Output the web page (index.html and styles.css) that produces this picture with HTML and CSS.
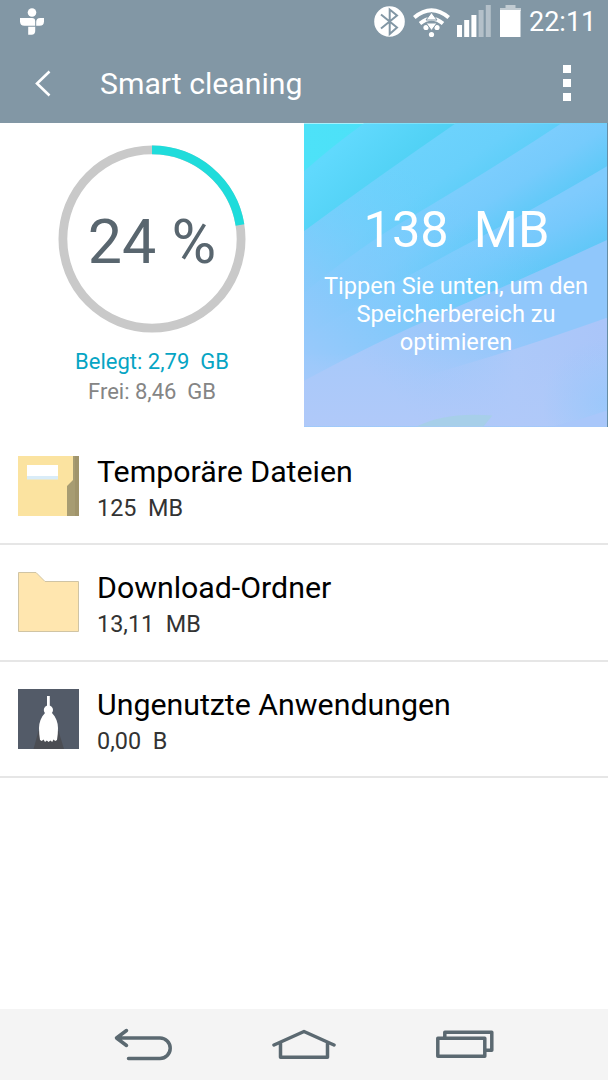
FILE: index.html
```html
<!DOCTYPE html>
<html lang="de">
<head>
  <meta charset="UTF-8" />
  <title>Smart cleaning</title>
  <meta name="viewport" content="width=device-width, initial-scale=1.0" />
  <link rel="stylesheet" href="styles.css">
</head>
<body>
  <header>
    <div class="status-bar">
      <svg class="notification" width="24" height="28" viewBox="0 0 24 28" fill="#fff">
        <circle cx="12" cy="4.5" r="4.3" />
        <path d="M0 10h12q3.2 0 3.2 3.2v4.600H4.500q-4.500 0-4.500-4.500z" />
        <path d="M16.200 17.800v-3.800q0-4 4-4h3.800v3.300q0 4.500-4.500 4.500z" />
        <path d="M8.200 18.700h7v4.300q0 3.700-3.700 3.700H8.200z" />
      </svg>
      <div class="status-icons">
        <svg width="31" height="32" viewBox="0 0 31 32">
          <circle cx="15.500" cy="15.500" r="15.300" fill="#fff" />
          <path d="M7 8.500L23 21.500 15.700 28V3.500L23 9.500 7 22.500" fill="none" stroke="#8297a5" stroke-width="2" />
        </svg>
        <svg class="wifi" width="37" height="30" viewBox="0 0 37 30">
          <g fill="none" stroke="#fff">
            <path d="M1.300 9.500Q18.500-5 35.700 9.500" stroke-width="4" />
            <path d="M7 15.500Q18.500 6 30 15.500" stroke-width="3.800" />
          </g>
          <circle cx="13" cy="19.500" r="2.600" fill="#fff" />
          <circle cx="24" cy="19.500" r="2.600" fill="#fff" />
          <circle cx="18.500" cy="26.500" r="2.600" fill="#fff" />
          <path d="M18.500 4.500l5.500 7.500H13zM13 15h11l-5.500 7.500z" fill="#fff" stroke="#8297a5" />
        </svg>
        <svg class="signal" width="34" height="32" viewBox="0 0 34 32" fill="#fff">
          <path d="M0 20h5v12H0zM7.200 15h5v17h-5zM14.400 10h5v22h-5z" />
          <path d="M21.600 5h5v27h-5zM28.800 0h5v32h-5z" opacity=".4" />
        </svg>
        <svg class="battery" width="21" height="32" viewBox="0 0 21 32" fill="#fff">
          <path d="M5.500 0h10v3H21v3H0V3h5.500z" opacity=".5" />
          <path d="M0 5h20.500v27H0z" />
        </svg>
        <span class="clock">22:11</span>
      </div>
    </div>
    <div class="title-bar">
      <svg class="back" width="16" height="28" viewBox="0 0 16 28" fill="none" stroke="#fff" stroke-width="2.600">
        <path d="M14.500 1.500L2 13.500l12.500 12" />
      </svg>
      <h1>Smart cleaning</h1>
      <div class="menu"><i></i><i></i><i></i></div>
    </div>
  </header>

  <section class="overview">
    <div class="usage">
      <div class="gauge">
        <svg width="188" height="188" viewBox="0 0 188 188" fill="none" stroke-width="8.800">
          <circle cx="94" cy="94" r="89.100" stroke="#c9c9c9" />
          <path d="M94 4.900A89.100 89.100 0 0 1 182 80" stroke="#1fdcdb" />
        </svg>
        <span class="percent">24 %</span>
      </div>
      <div class="used">Belegt: 2,79&nbsp; GB</div>
      <div class="free">Frei: 8,46&nbsp; GB</div>
    </div>
    <div class="optimize">
      <svg class="waves" width="304" height="304" viewBox="0 0 304 304">
        <defs>
          <linearGradient id="w0" x1="0" y1="0" x2="1" y2="0">
            <stop offset="0" stop-color="#4de2f8" /><stop offset="1" stop-color="#4bd9f7" />
          </linearGradient>
          <linearGradient id="w1" gradientUnits="userSpaceOnUse" x1="20" y1="35" x2="65" y2="82">
            <stop offset="0" stop-color="#60d9fd" /><stop offset="1" stop-color="#50d1f4" />
          </linearGradient>
          <linearGradient id="w2" gradientUnits="userSpaceOnUse" x1="100" y1="38" x2="150" y2="110">
            <stop offset="0" stop-color="#6cd2fc" /><stop offset=".4" stop-color="#69d0fb" /><stop offset="1" stop-color="#53ccf5" />
          </linearGradient>
          <linearGradient id="w3" gradientUnits="userSpaceOnUse" x1="190" y1="45" x2="225" y2="100">
            <stop offset="0" stop-color="#7bcdfd" /><stop offset=".4" stop-color="#76cbfc" /><stop offset="1" stop-color="#5bc9f7" />
          </linearGradient>
          <linearGradient id="w4" gradientUnits="userSpaceOnUse" x1="200" y1="105" x2="230" y2="165">
            <stop offset="0" stop-color="#7fcbfd" /><stop offset=".35" stop-color="#76c9fc" /><stop offset="1" stop-color="#5bc7f6" />
          </linearGradient>
          <linearGradient id="w5" gradientUnits="userSpaceOnUse" x1="90" y1="275" x2="200" y2="165">
            <stop offset="0" stop-color="#a8c9fa" /><stop offset="1" stop-color="#90c7fb" />
          </linearGradient>
          <linearGradient id="w6" gradientUnits="userSpaceOnUse" x1="120" y1="0" x2="304" y2="0">
            <stop offset="0" stop-color="#adc9f9" stop-opacity="0" /><stop offset=".5" stop-color="#adc9f9" /><stop offset="1" stop-color="#aac5f9" />
          </linearGradient>
          <linearGradient id="haze" gradientUnits="userSpaceOnUse" x1="20" y1="250" x2="145" y2="70">
            <stop offset="0" stop-color="#9ac9fb" /><stop offset=".3" stop-color="#8ac9fb" stop-opacity=".9" /><stop offset="1" stop-color="#70cffc" stop-opacity="0" />
          </linearGradient>
          <linearGradient id="bottom" gradientUnits="userSpaceOnUse" x1="0" y1="230" x2="0" y2="304">
            <stop offset="0" stop-color="#b0c9f9" stop-opacity="0" /><stop offset="1" stop-color="#b0c9f9" />
          </linearGradient>
          <radialGradient id="corner" gradientUnits="userSpaceOnUse" cx="304" cy="280" r="65">
            <stop offset="0" stop-color="#9ac8fb" stop-opacity=".9" /><stop offset="1" stop-color="#9ac8fb" stop-opacity="0" />
          </radialGradient>
        </defs>
        <path d="M0 0h304v304H0z" fill="url(#w0)" />
        <path d="M0 48Q28 23 60 0h244v304H0z" fill="url(#w1)" />
        <path d="M0 108Q72 55 152 0h152v304H0z" fill="url(#w2)" />
        <path d="M0 170Q60 120 112 91Q190 45 258 0h46v304H0z" fill="url(#w3)" />
        <path d="M0 215Q80 165 160 123T304 43v261H0z" fill="url(#w4)" />
        <path d="M0 108Q72 55 152 0h152v304H0z" fill="url(#haze)" />
        <path d="M0 258Q70 220 140 190T304 117v187H0z" fill="url(#w5)" />
        <path d="M110 257Q150 245 190 233T304 195v109H110z" fill="url(#w6)" />
        <path d="M0 230h304v74H0z" fill="url(#bottom)" />
        <path d="M230 215Q270 207 304 195v109H230z" fill="url(#corner)" />
        <path d="M250 304q28-7 54-16v16z" fill="#a9c7fa" />
        <path d="M113 304q30-15 76-11l-9 11z" fill="#a7cfe9" />
      </svg>
      <div class="amount">138&nbsp; MB</div>
      <p>Tippen Sie unten, um den Speicherbereich zu optimieren</p>
    </div>
  </section>

  <ul class="items">
    <li>
      <svg width="61" height="60" viewBox="0 0 61 60">
        <path d="M0 0h61v60H0z" fill="#a79c72" />
        <path d="M57 0h4v60h-4z" fill="#9b9068" opacity=".6" />
        <path d="M0 0h55v24l-6 6v30H0z" fill="#fbe3a0" />
        <path d="M9 9h31v14H9z" fill="#fff" />
        <path d="M9 20h31v3.500H9z" fill="#d9ecf8" />
      </svg>
      <div>
        <h2>Temporäre Dateien</h2>
        <span>125&nbsp; MB</span>
      </div>
    </li>
    <li>
      <svg width="61" height="60" viewBox="0 0 61 60">
        <path d="M.5.5h17.500l9 9h33.500v50H.5z" fill="#ffe6af" stroke="#d0c4a4" />
      </svg>
      <div>
        <h2>Download-Ordner</h2>
        <span>13,11&nbsp; MB</span>
      </div>
    </li>
    <li>
      <svg width="61" height="60" viewBox="0 0 61 60">
        <path d="M0 0h61v60H0z" fill="#535b68" />
        <path d="M20.500 42h20l5.500 18H15.500z" fill="#4b4d53" />
        <g fill="#fff">
          <path d="M29 7h2.800v12H29z" />
          <circle cx="30.400" cy="21" r="4.600" />
          <path d="M27 24h7C38 28 40 33.500 40 39q0 6-1 12l-1.800 1-1.700-1.500-1.300 2.500-1.800-1.500-1.800 1.500-1.800-1.500-1.800 1.500-1.500-2.500-1.700 1.500-1.800-1q-1-6-1-12C21 33.500 23 28 27 24z" />
        </g>
      </svg>
      <div>
        <h2>Ungenutzte Anwendungen</h2>
        <span>0,00&nbsp; B</span>
      </div>
    </li>
  </ul>

  <nav>
    <svg width="60" height="34" viewBox="0 0 60 34">
      <path d="M14.500 2.500L4.500 10l10 7.500M4.500 10h43.500a10.200 10.200 0 0 1 0 20.400H16.500" />
    </svg>
    <svg width="64" height="34" viewBox="0 0 64 34">
      <path d="M2 17L32 3.500l30 13.500M8.500 15v14.200h47V15" />
    </svg>
    <svg class="square" width="60" height="34" viewBox="0 0 60 34">
      <path d="M1.800 10.200h47v18h-47zM8.800 10V4.200h47V22.200h-7" />
    </svg>
  </nav>
</body>
</html>
```

FILE: styles.css
```css
* {
  box-sizing: border-box;
}
body {
  font-family: Roboto, sans-serif;
  background-color: #ffffff;
  color: #000;
  margin: 0;
  height: 1080px;
  display: flex;
  flex-direction: column;
  overflow: hidden;
}
svg {
  display: block;
  flex: none;
}
header {
  background-color: #8297a5;
  color: white;
  height: 123px;
}
.status-bar {
  display: flex;
  justify-content: space-between;
  height: 44px;
  padding: 5px 11px 0 20px;
}
.notification {
  margin-top: 3px;
}
.status-icons {
  display: flex;
  align-items: flex-start;
}
.status-icons svg:first-child {
  margin-top: 1px;
}
.status-icons .wifi {
  margin: 3px 0 0 8px;
}
.signal {
  margin-left: 7px;
}
.battery {
  margin-left: 9px;
}
.clock {
  width: 68px;
  margin-left: 8px;
  font-size: 27px;
  line-height: 35px;
}
.title-bar {
  display: flex;
  align-items: center;
  height: 79px;
  padding: 0 37px 0 35px;
}
.title-bar h1 {
  margin: 0 0 0 49px;
  font-size: 30.2px;
  font-weight: normal;
  flex: 1;
}
.menu {
  display: grid;
  gap: 6px;
  margin-top: -1px;
}
.menu i {
  width: 8px;
  height: 8px;
  background-color: white;
}
.overview {
  display: flex;
  height: 304px;
}
.usage {
  width: 304px;
  display: flex;
  flex-direction: column;
  align-items: center;
  padding-top: 22px;
  font-size: 22px;
  line-height: 30px;
}
.gauge {
  display: grid;
  place-items: center;
  margin-bottom: 14px;
}
.gauge > * {
  grid-area: 1 / 1;
}
.percent {
  font-size: 61px;
  color: #59666f;
  padding-top: 6px;
}
.used {
  color: #06a5c4;
}
.free {
  color: #858585;
}
.optimize {
  position: relative;
  width: 304px;
  padding-top: 76px;
  border-right: 1px solid #658da5;
  color: white;
  text-align: center;
}
.waves {
  position: absolute;
  left: 0;
  top: 0;
  width: 303px;
}
.amount {
  position: relative;
  padding-left: 2px;
  font-size: 50.5px;
  line-height: 62px;
}
.optimize p {
  position: relative;
  margin: 11px 15px 0 16px;
  font-size: 23.6px;
  line-height: 28px;
}
.items {
  list-style: none;
  margin: 1.5px 0 0;
  padding: 0;
  flex: 1;
}
.items li {
  display: flex;
  align-items: center;
  gap: 18px;
  height: 116.5px;
  padding-left: 18px;
  border-bottom: 2px solid #e6e6e6;
}
.items li div {
  padding-top: 8px;
}
.items h2 {
  margin: 0;
  font-size: 30.3px;
  font-weight: normal;
  line-height: 36px;
}
.items span {
  display: block;
  color: #333;
  font-size: 23.4px;
  line-height: 36px;
}
nav {
  display: flex;
  justify-content: center;
  align-items: center;
  gap: 100px;
  height: 71px;
  background-color: #f4f4f4;
}
nav path {
  fill: none;
  stroke: #5b6971;
  stroke-width: 3.5;
  stroke-linecap: round;
  stroke-linejoin: round;
}
.square path {
  stroke-linecap: butt;
}
```
